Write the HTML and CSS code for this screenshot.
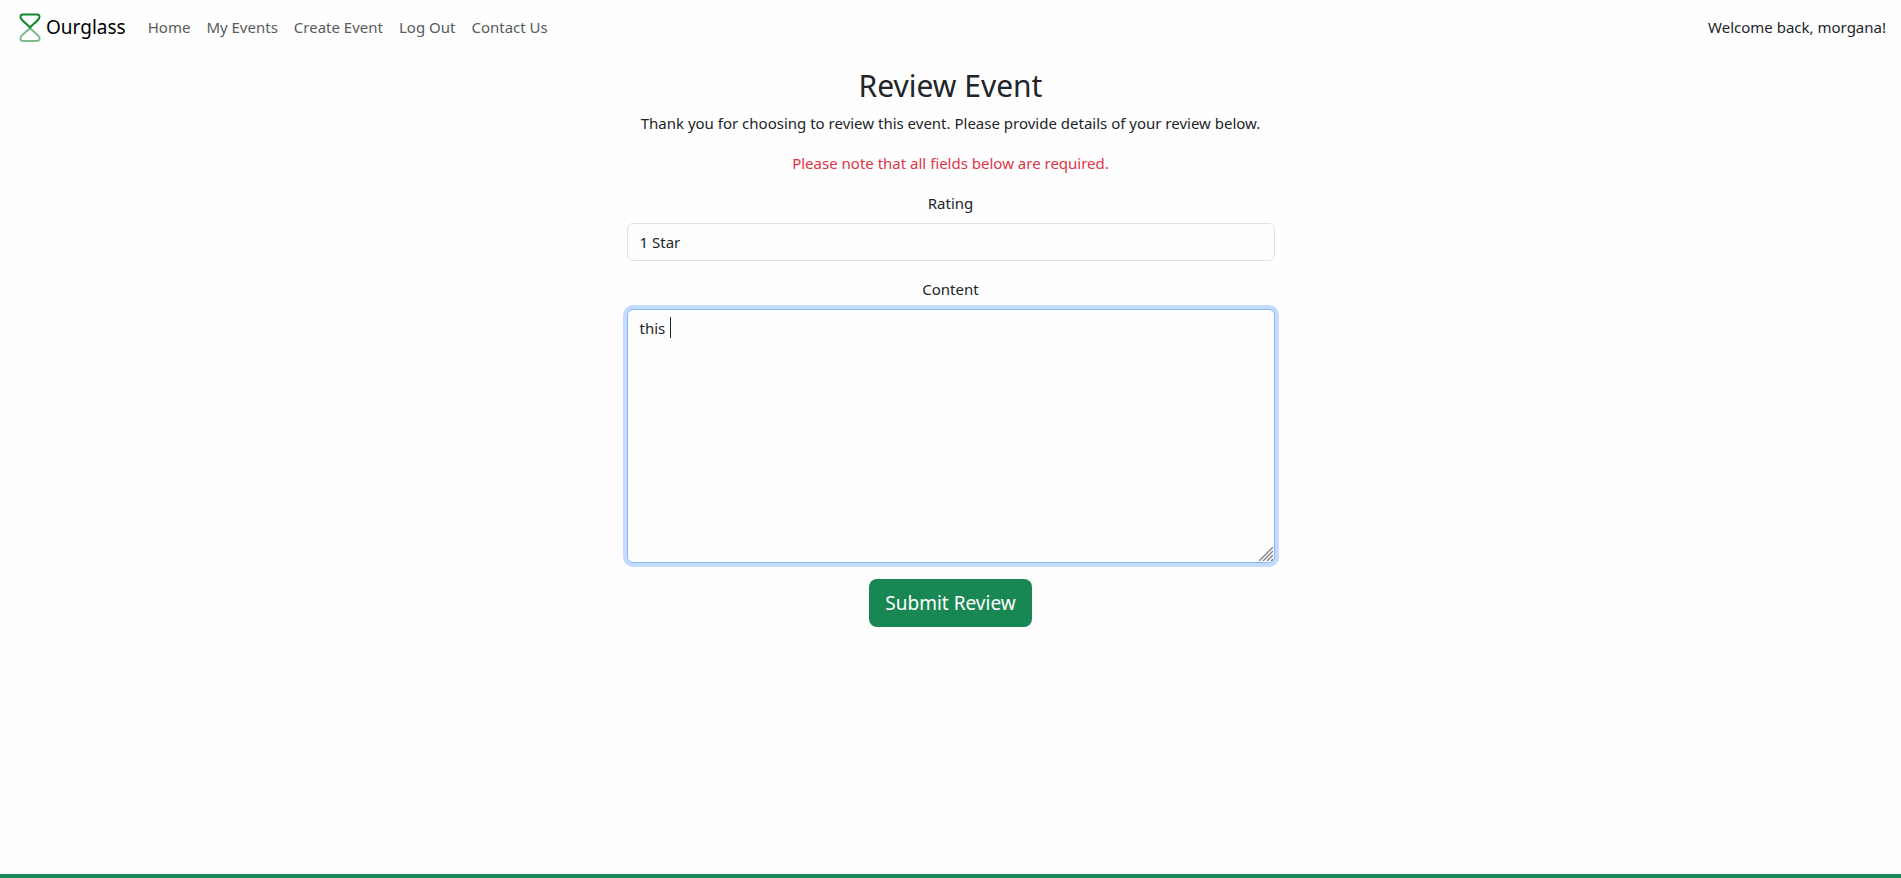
FILE: index.html
```html
<!DOCTYPE html>
<html lang="en">
<head>
<meta charset="utf-8">
<meta name="viewport" content="width=device-width, initial-scale=1">
<title>Ourglass - Review Event</title>
<link rel="stylesheet" href="styles.css">
</head>
<body>
<nav class="navbar">
  <a class="brand" href="#">
    <svg class="brand-icon" viewBox="0 0 24 30" aria-hidden="true" fill="none" stroke-width="2" stroke-linejoin="round">
      <path stroke="#7fbb8d" d="M12 16C9 19.500 4.500 22 2.700 25Q1.800 29 5 29H19Q22.200 29 21.300 25C19.500 22 15 19.500 12 16Z"/>
      <path stroke="#0f8629" d="M12 15.500C9 12 4.500 9.500 2.700 6Q1.800 2.500 5 2.500H19Q22.200 2.500 21.300 6C19.500 9.500 15 12 12 15.500Z"/>
    </svg>
    <span>Ourglass</span>
  </a>
  <ul class="nav-links">
    <li><a href="#">Home</a></li>
    <li><a href="#">My Events</a></li>
    <li><a href="#">Create Event</a></li>
    <li><a href="#">Log Out</a></li>
    <li><a href="#">Contact Us</a></li>
  </ul>
  <span class="welcome">Welcome back, morgana!</span>
</nav>
<main class="content">
  <h1>Review Event</h1>
  <p>Thank you for choosing to review this event. Please provide details of your review below.</p>
  <p class="notice">Please note that all fields below are required.</p>
  <form class="review-form">
    <label for="rating">Rating</label>
    <select class="field" id="rating">
      <option>1 Star</option>
      <option>2 Stars</option>
      <option>3 Stars</option>
      <option>4 Stars</option>
      <option>5 Stars</option>
    </select>
    <label for="review">Content</label>
    <div class="textarea-wrap">
      <textarea class="field field-active" id="review">this </textarea>
      <span class="caret"></span>
      <svg class="grip" viewBox="0 0 14 14" aria-hidden="true" stroke="#808080" stroke-width="1.4">
        <path d="M0 14L14 0M4 14L14 4M8 14L14 8M12 14L14 12"/>
      </svg>
    </div>
    <button class="submit" type="button">Submit Review</button>
  </form>
</main>
<footer class="footer"></footer>
</body>
</html>
```
FILE: styles.css
```css
* { box-sizing: border-box; }

body {
  margin: 0;
  min-height: 100vh;
  display: flex;
  flex-direction: column;
  background: #fefefe;
  color: #212529;
  font-family: "Segoe UI", "Noto Sans", "Open Sans", sans-serif;
  font-size: 15px;
  line-height: 24px;
}

.navbar {
  display: flex;
  align-items: center;
  height: 56px;
  padding: 0 15px 2px 18px;
}

.brand {
  display: flex;
  align-items: center;
  gap: 4px;
  margin-right: 14px;
  color: #000;
  font-size: 19px;
  text-decoration: none;
}

.brand-icon { width: 24px; height: 30px; }

.nav-links {
  display: flex;
  margin: 0;
  padding: 0;
  list-style: none;
}

.nav-links a {
  padding: 8px;
  color: #585a5c;
  text-decoration: none;
}

.welcome { margin-left: auto; }

.content {
  flex: 1;
  width: 100%;
  max-width: 1320px;
  margin: 0 auto;
  padding: 10px 12px;
  text-align: center;
}

h1 {
  margin: 0 0 5px;
  font-size: 30px;
  font-weight: 400;
  line-height: 40px;
}

p { margin: 0 0 16px; }

.notice { color: #dc3545; }

.review-form {
  display: flex;
  flex-direction: column;
  width: 50%;
  margin: 0 auto;
}

.review-form label { margin-bottom: 8px; }

.field {
  display: block;
  width: 100%;
  margin: 0;
  padding: 6px 12px;
  border: 1px solid #dee2e6;
  border-radius: 6px;
  outline: 0;
  appearance: none;
  background: #fefefe;
  color: #212529;
  font: inherit;
}

select.field {
  height: 38px;
  margin-bottom: 16px;
}

.textarea-wrap {
  position: relative;
  margin-bottom: 16px;
}

textarea.field {
  height: 254px;
  resize: none;
}

.field-active {
  border-color: #86b7fe;
  box-shadow: 0 0 0 4px #c2dbfe;
}

.caret {
  position: absolute;
  top: 8px;
  left: 43px;
  width: 1px;
  height: 21px;
  background: #212529;
}

.grip {
  position: absolute;
  right: 2px;
  bottom: 2px;
  width: 14px;
  height: 14px;
}

.submit {
  align-self: center;
  height: 48px;
  padding: 8px 16px;
  border: 0;
  border-radius: 8px;
  background: #198754;
  color: #fff;
  font: inherit;
  font-size: 19px;
}

.footer {
  height: 4px;
  background: #198754;
}
```
